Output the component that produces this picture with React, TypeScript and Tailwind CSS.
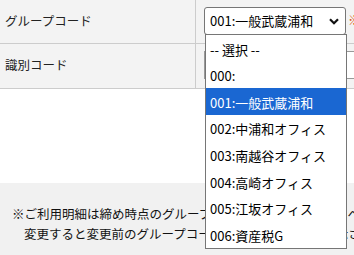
import React from 'react'

const options = [
  '-- 選択 --',
  '000:',
  '001:一般武蔵浦和',
  '002:中浦和オフィス',
  '003:南越谷オフィス',
  '004:高崎オフィス',
  '005:江坂オフィス',
  '006:資産税G',
]

export default function App() {
  return (
    <div className="relative h-[255px] w-[354px] overflow-hidden bg-white font-['Noto_Sans_CJK_JP','Noto_Sans',sans-serif] text-[#222]">
      {/* form table */}
      <div className="flex h-[44px] border-b border-[#cccccc] bg-[#f3f3f3]">
        <div className="flex w-[196px] shrink-0 items-center border-r border-[#cccccc] pl-[5px] text-[12.5px]">
          グループコード
        </div>
        <div className="flex flex-1 items-start gap-[2px] pl-[8px] pt-[7px]">
          <div className="flex h-[28px] w-[142px] shrink-0 items-center justify-between rounded-[3px] border border-[#767676] bg-white pl-[5px] pr-[6px] text-[13px] text-black">
            <span>001:一般武蔵浦和</span>
            <svg width="10" height="7" viewBox="0 0 10 7" fill="none">
              <path d="M1 1.2 5 5.2 9 1.2" stroke="#111" strokeWidth="2.2" />
            </svg>
          </div>
          <span className="whitespace-nowrap pt-[4px] text-[12.5px] text-[#e0561b]">※必須</span>
        </div>
      </div>
      <div className="flex h-[45px] border-b border-[#cccccc] bg-[#f3f3f3]">
        <div className="flex w-[196px] shrink-0 items-center border-r border-[#cccccc] pb-[2px] pl-[5px] text-[12.5px]">
          識別コード
        </div>
        <div className="flex flex-1 items-start pl-[8px] pt-[7px]">
          <div className="h-[28px] w-[200px] shrink-0 border border-[#999999] bg-white" />
        </div>
      </div>

      <div className="h-[94px]" />

      {/* note */}
      <div className="h-[72px] whitespace-nowrap bg-[#f1f1f1] pt-[21px] text-[12.5px] leading-[20px] text-[#111]">
        <div className="pl-[12px]">※ご利用明細は締め時点のグループコードで集計されます。ページ</div>
        <div className="pl-[24px]">変更すると変更前のグループコードでのご利用明細は表示されません。</div>
      </div>

      {/* open select list */}
      <div className="absolute left-[205px] top-[34px] w-[142px] border border-[#767676] bg-white text-[13px] text-black">
        {options.map((o, i) => (
          <div
            key={o}
            className={
              i === 2
                ? 'flex h-[26.6px] items-center bg-[#1a67d2] pl-[4px] pt-[2px] text-white'
                : 'flex h-[26.6px] items-center pl-[4px] pt-[2px]'
            }
          >
            {o}
          </div>
        ))}
      </div>
    </div>
  )
}
